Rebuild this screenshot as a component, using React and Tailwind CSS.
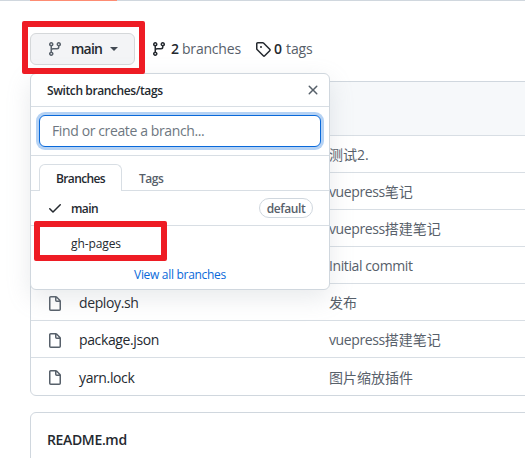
const PATHS = {
  branch:
    "M11.75 2.5a.75.75 0 100 1.5.75.75 0 000-1.5zm-2.25.75a2.25 2.25 0 113 2.122V6A2.5 2.5 0 0110 8.5H6a1 1 0 00-1 1v1.128a2.251 2.251 0 11-1.5 0V5.372a2.25 2.25 0 111.5 0v1.836A2.492 2.492 0 016 7h4a1 1 0 001-1v-.628A2.25 2.25 0 019.5 3.25zM4.25 12a.75.75 0 100 1.5.75.75 0 000-1.5zM3.5 3.25a.75.75 0 111.5 0 .75.75 0 01-1.5 0z",
  tag: "M2.5 7.775V2.75a.25.25 0 01.25-.25h5.025a.25.25 0 01.177.073l6.25 6.25a.25.25 0 010 .354l-5.025 5.025a.25.25 0 01-.354 0l-6.25-6.25a.25.25 0 01-.073-.177zm-1.5 0V2.75C1 1.784 1.784 1 2.75 1h5.025c.464 0 .91.184 1.238.513l6.25 6.25a1.75 1.75 0 010 2.474l-5.026 5.026a1.75 1.75 0 01-2.474 0l-6.25-6.25A1.75 1.75 0 011 7.775zM6 5a1 1 0 100 2 1 1 0 000-2z",
  x: "M3.72 3.72a.75.75 0 011.06 0L8 6.94l3.22-3.22a.75.75 0 111.06 1.06L9.06 8l3.22 3.22a.75.75 0 11-1.06 1.06L8 9.06l-3.22 3.22a.75.75 0 01-1.06-1.06L6.94 8 3.72 4.78a.75.75 0 010-1.06z",
  check:
    "M13.78 4.22a.75.75 0 010 1.06l-7.25 7.25a.75.75 0 01-1.06 0L2.22 9.28a.75.75 0 011.06-1.06L6 10.94l6.72-6.72a.75.75 0 011.06 0z",
  file: "M3.75 1.5a.25.25 0 00-.25.25v11.5c0 .138.112.25.25.25h8.5a.25.25 0 00.25-.25V6H9.75A1.75 1.75 0 018 4.25V1.5H3.75zm5.75.56v2.19c0 .138.112.25.25.25h2.19L9.5 2.06zM2 1.75C2 .784 2.784 0 3.75 0h5.086c.464 0 .909.184 1.237.513l3.414 3.414c.329.328.513.773.513 1.237v8.086A1.75 1.75 0 0112.25 15h-8.5A1.75 1.75 0 012 13.25V1.75z",
};

function Icon({ name, className = "" }) {
  return (
    <svg viewBox="0 0 16 16" width="16" height="16" fill="currentColor" fillRule="evenodd" className={`shrink-0 ${className}`}>
      <path d={PATHS[name]} />
    </svg>
  );
}

// name, Latin part of the message, Chinese part of the message
const FILES = [
  ["docs", "", "测试2."],
  [".gitignore", "vuepress", "笔记"],
  ["README.md", "vuepress", "搭建笔记"],
  ["LICENSE", "Initial commit", ""],
  ["deploy.sh", "", "发布"],
  ["package.json", "vuepress", "搭建笔记"],
  ["yarn.lock", "", "图片缩放插件"],
];

function FileRow({ name, latin, chinese, covered }) {
  return (
    <div className="flex h-[37px] items-center border-t border-[#d8dee4] pt-0.5 pl-4 last:h-[38px]">
      <div className="flex w-[282px] shrink-0 items-center text-[#24292f]">
        {!covered && (
          <>
            <Icon name="file" className="mt-px text-[#57606a]" />
            <span className="ml-4 tracking-[-0.38px]">{name}</span>
          </>
        )}
      </div>
      <span className="text-[#57606a]">
        <span className="tracking-[-0.4px]">{latin}</span>
        {chinese}
      </span>
    </div>
  );
}

function BranchMenu() {
  return (
    <div className="absolute top-[73px] left-[30px] flex h-[217px] w-[300px] flex-col rounded-md border border-[#d0d7de] bg-white text-xs text-[#24292f] shadow-[0_8px_24px_rgba(140,149,159,0.2)]">
      <div className="flex h-[33px] items-center justify-between border-b border-[#d8dee4] pr-2 pl-4">
        <span className="pt-0.5 font-semibold tracking-[-0.4px]">Switch branches/tags</span>
        <Icon name="x" className="text-[#57606a]" />
      </div>
      <div className="h-[49px] border-b border-[#d8dee4] p-2">
        <div className="flex h-8 items-center rounded-md border border-[#0969da] bg-white px-3 text-sm tracking-[-0.38px] text-[#6e7781] shadow-[0_0_0_3px_rgba(9,105,218,0.3)]">
          Find or create a branch...
        </div>
      </div>
      <div className="flex h-[35px] items-end border-b border-[#d8dee4] pl-2">
        <div className="-mb-px flex h-[27px] w-[83px] items-center justify-center rounded-t-md border border-b-0 border-[#d8dee4] bg-white pt-0.5 font-semibold tracking-[-0.6px]">
          Branches
        </div>
        <div className="flex h-[26px] items-center pt-1 pl-[17px] font-semibold tracking-[-0.5px] text-[#57606a]">Tags</div>
      </div>
      <div className="flex h-[35px] items-center border-b border-[#d8dee4] pr-4 pl-4">
        <Icon name="check" />
        <span className="ml-2 grow pt-0.5 font-semibold tracking-[-0.6px]">main</span>
        <span className="flex h-5 w-[54px] items-center justify-center rounded-full border border-[#d0d7de] pt-0.5 font-semibold tracking-[-0.4px] text-[#57606a]">default</span>
      </div>
      <div className="flex h-[34px] items-center pt-0.5 pl-10 tracking-[-0.1px]">gh-pages</div>
      <div className="flex h-[29px] items-center justify-center tracking-[-0.3px] text-[#0969da]">View all branches</div>
    </div>
  );
}

export default function App() {
  return (
    <div className="relative h-[458px] w-[525px] overflow-hidden bg-white font-['Open_Sans','Noto_Sans_CJK_SC',sans-serif] text-sm text-[#24292f]">
      <div className="h-px bg-[#d0d7de] pl-[30px]">
        <div className="h-px w-[87px] bg-[#fd8c73]" />
      </div>
      <div className="flex h-20 items-center pl-[30px] pt-4">
        <div className="flex h-8 w-[105px] items-center rounded-md border border-[#d5d8da] bg-[#f3f4f6] pl-4">
          <Icon name="branch" className="text-[#57606a]" />
          <span className="ml-2 w-8 font-semibold tracking-[-0.8px]">main</span>
          <span className="ml-[7px] border-4 border-b-0 border-transparent border-t-[#424a53]" />
        </div>
        <div className="ml-4 flex items-center">
          <Icon name="branch" />
          <span className="ml-1 w-2 font-semibold">2</span>
          <span className="ml-[3px] w-[55px] tracking-[-0.2px] text-[#57606a]">branches</span>
        </div>
        <div className="ml-[18px] flex items-center">
          <Icon name="tag" />
          <span className="ml-[3px] w-2 font-semibold">0</span>
          <span className="ml-[4px] tracking-[-0.1px] text-[#57606a]">tags</span>
        </div>
      </div>
      <div className="ml-[30px] w-[520px] rounded-md border border-[#d0d7de]">
        <div className="h-[53px] rounded-t-md bg-[#f6f8fa]" />
        {FILES.map(([name, latin, chinese], i) => (
          <FileRow key={name} name={name} latin={latin} chinese={chinese} covered={i < 4} />
        ))}
      </div>
      <div className="mt-4 ml-[30px] h-20 w-[520px] rounded-md border border-[#d0d7de] px-4 pt-[17px] font-semibold tracking-[-0.35px]">
        README.md
      </div>
      <BranchMenu />
      <div className="absolute top-[21px] left-[22px] h-[53px] w-[123px] rounded-[2px] border-[6px] border-[#ee1c24]" />
      <div className="absolute top-[221px] left-[34px] h-[40px] w-[133px] rounded-[2px] border-[6px] border-[#ee1c24]" />
    </div>
  );
}
